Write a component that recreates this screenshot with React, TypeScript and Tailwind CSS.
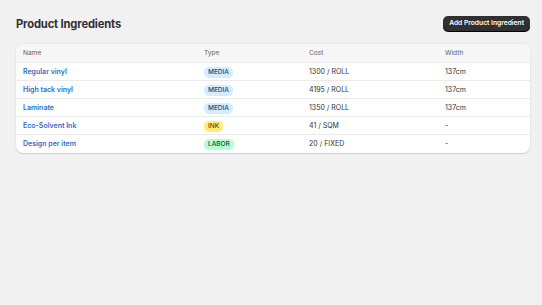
const rows = [
  { name: "Regular vinyl", type: "MEDIA", cost: "1300 / ROLL", width: "137cm" },
  { name: "High tack vinyl", type: "MEDIA", cost: "4195 / ROLL", width: "137cm" },
  { name: "Laminate", type: "MEDIA", cost: "1350 / ROLL", width: "137cm" },
  { name: "Eco-Solvent Ink", type: "INK", cost: "41 / SQM", width: "-" },
  { name: "Design per item", type: "LABOR", cost: "20 / FIXED", width: "-" },
];

const badgeStyles: Record<string, string> = {
  MEDIA: "bg-[#d5ebff] text-[#00527c]",
  INK: "bg-[#ffeb78] text-[#5e4200]",
  LABOR: "bg-[#b4fed2] text-[#0c5132]",
};

const cols = "grid grid-cols-[181px_105px_136px_1fr] items-center";

export default function App() {
  return (
    <div
      className="min-h-[305px] w-full bg-[#f1f1f1] pl-4 pr-3 pt-[15px] text-[#303030]"
      style={{ fontFamily: "Inter, 'Noto Sans', sans-serif" }}
    >
      <div className="flex h-[16px] items-center justify-between">
        <h1 className="mt-[1px] text-[11.2px] font-bold leading-[16px] tracking-[-0.15px]">Product Ingredients</h1>
        <button className="h-[15px] rounded-[5px] bg-[#303030] px-[6px] text-[6.7px] font-semibold leading-[15px] text-white shadow-[0_1px_0_#000]">
          Add Product Ingredient
        </button>
      </div>

      <div className="mt-[13px] overflow-hidden rounded-[7px] bg-white shadow-[0_1px_1px_rgba(0,0,0,0.12),0_0_0_0.5px_rgba(0,0,0,0.06)]">
        <div className={`${cols} h-[19px] border-b border-[#ebebeb] bg-[#f7f7f7] pt-[1px] text-[6.6px] text-[#616161]`}>
          <div className="pl-[7px]">Name</div>
          <div className="pl-[7px]">Type</div>
          <div className="pl-[7px]">Cost</div>
          <div className="pl-[7px]">Width</div>
        </div>
        {rows.map((r, i) => (
          <div
            key={r.name}
            className={`${cols} h-[18px] pt-[1px] text-[7px] ${i < rows.length - 1 ? "border-b border-[#ebebeb]" : ""}`}
          >
            <div className="pl-[7px] font-semibold text-[#2c6ecb]">{r.name}</div>
            <div className="pl-[7px]">
              <span className={`inline-block rounded-[5px] px-[4px] text-[6.5px] font-medium leading-[11px] ${badgeStyles[r.type]}`}>
                {r.type}
              </span>
            </div>
            <div className="pl-[7px]">{r.cost}</div>
            <div className="pl-[7px]">{r.width}</div>
          </div>
        ))}
      </div>
    </div>
  );
}
